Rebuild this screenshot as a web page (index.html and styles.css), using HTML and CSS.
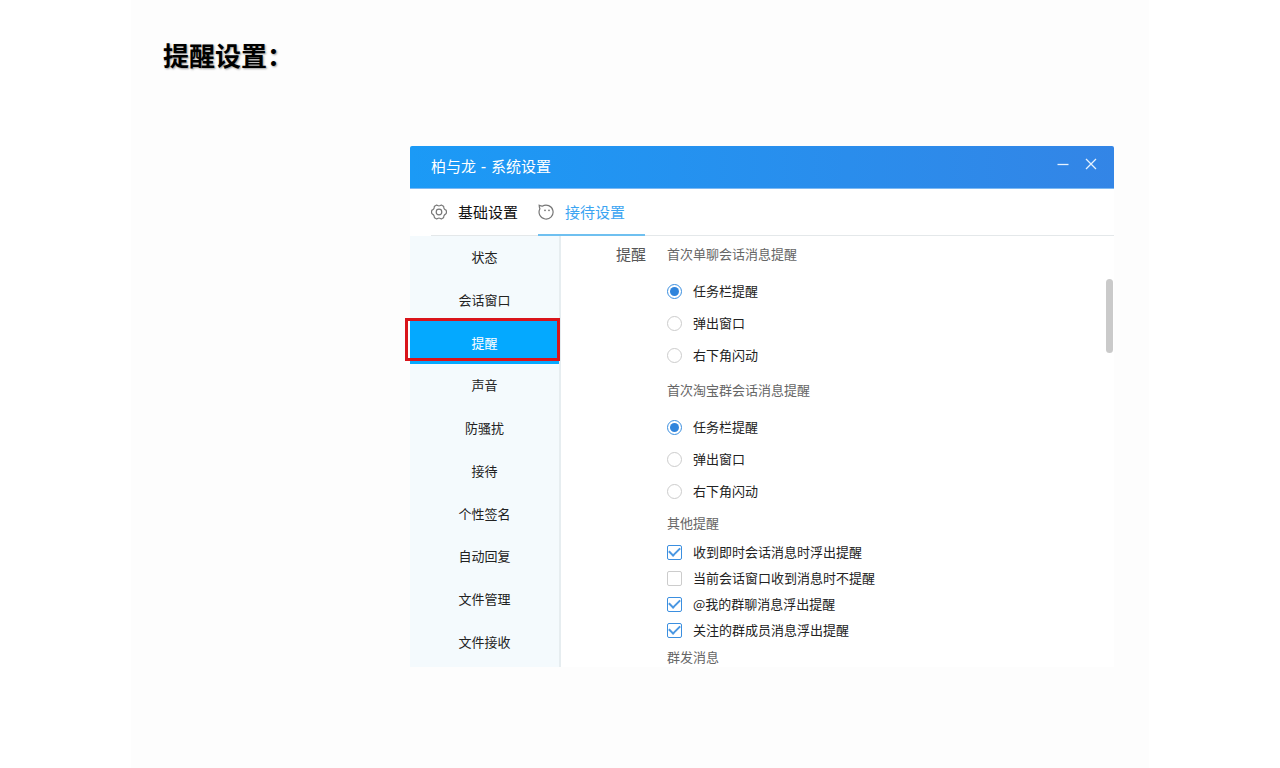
FILE: index.html
```html
<!DOCTYPE html>
<html lang="zh-CN">
<head>
<meta charset="utf-8">
<meta name="viewport" content="width=device-width, initial-scale=1">
<title>提醒设置</title>
<link rel="stylesheet" href="styles.css">
</head>
<body>
<main class="page">
  <h1 class="page-title">提醒设置：</h1>
  <section class="window" aria-label="系统设置">
    <header class="titlebar">
      <h2 class="titlebar-text">柏与龙 - 系统设置</h2>
      <button class="win-button" type="button" aria-label="最小化">
        <svg width="14" height="14" viewBox="0 0 14 14"><path d="M1.500 7.500h11"/></svg>
      </button>
      <button class="win-button" type="button" aria-label="关闭">
        <svg width="14" height="14" viewBox="0 0 14 14"><path d="M2 2l10 10M12 2L2 12"/></svg>
      </button>
    </header>
    <nav class="tabs">
      <button class="tab" type="button">
        <svg class="tab-icon" width="16" height="16" viewBox="0 0 16 16"><path d="M5.200 1.200Q6.200 1 6.700 1.600Q8 2.400 9.300 1.600Q9.800 1 10.800 1.200L12.400 2.200Q13 3 12.800 3.800Q13.200 5.300 14.500 5.900Q15.300 6.200 15.400 7V9Q15.300 9.800 14.500 10.100Q13.200 10.700 12.800 12.200Q13 13 12.400 13.800L10.800 14.800Q9.800 15 9.300 14.400Q8 13.600 6.700 14.400Q6.200 15 5.200 14.800L3.600 13.800Q3 13 3.200 12.200Q2.800 10.700 1.500 10.100Q.7 9.800.6 9V7Q.7 6.200 1.500 5.900Q2.800 5.300 3.200 3.800Q3 3 3.600 2.200Z"/><circle cx="8" cy="8" r="2.800"/></svg>
        <span>基础设置</span>
      </button>
      <button class="tab tab-active" type="button" aria-current="page">
        <svg class="tab-icon" width="16" height="16" viewBox="0 0 16 16"><path d="M1.200 1.200Q2.800 2 4.300 2.200A7 7 0 1 1 1.900 4.800Q1.100 3 1.200 1.200Z"/><circle class="eye" cx="7" cy="6.300" r=".9"/><circle class="eye" cx="11" cy="6.300" r=".9"/></svg>
        <span>接待设置</span>
      </button>
    </nav>
    <div class="body">
      <nav class="sidebar">
        <button class="side-item" type="button">状态</button>
        <button class="side-item" type="button">会话窗口</button>
        <button class="side-item side-item-active" type="button" aria-current="true">提醒</button>
        <button class="side-item" type="button">声音</button>
        <button class="side-item" type="button">防骚扰</button>
        <button class="side-item" type="button">接待</button>
        <button class="side-item" type="button">个性签名</button>
        <button class="side-item" type="button">自动回复</button>
        <button class="side-item" type="button">文件管理</button>
        <button class="side-item" type="button">文件接收</button>
      </nav>
      <form class="content">
        <h3 class="section-label">提醒</h3>
        <div class="groups">
          <h4 class="group-title">首次单聊会话消息提醒</h4>
          <div class="radios">
            <label class="option"><input class="radio" type="radio" name="single" checked>任务栏提醒</label>
            <label class="option"><input class="radio" type="radio" name="single">弹出窗口</label>
            <label class="option"><input class="radio" type="radio" name="single">右下角闪动</label>
          </div>
          <h4 class="group-title">首次淘宝群会话消息提醒</h4>
          <div class="radios">
            <label class="option"><input class="radio" type="radio" name="group" checked>任务栏提醒</label>
            <label class="option"><input class="radio" type="radio" name="group">弹出窗口</label>
            <label class="option"><input class="radio" type="radio" name="group">右下角闪动</label>
          </div>
          <h4 class="group-title group-title-close">其他提醒</h4>
          <div class="checks">
            <label class="option"><input class="check" type="checkbox" checked>收到即时会话消息时浮出提醒</label>
            <label class="option"><input class="check" type="checkbox">当前会话窗口收到消息时不提醒</label>
            <label class="option"><input class="check" type="checkbox" checked>@我的群聊消息浮出提醒</label>
            <label class="option"><input class="check" type="checkbox" checked>关注的群成员消息浮出提醒</label>
          </div>
          <h4 class="group-title group-title-close">群发消息</h4>
        </div>
        <div class="scroll-thumb"></div>
      </form>
    </div>
  </section>
</main>
</body>
</html>
```
FILE: styles.css
```css
* {
  box-sizing: border-box;
}

body {
  margin: 0;
  background: #fff;
  color: #222;
  font: 13px/20px "Noto Sans CJK SC", sans-serif;
}

h1, h2, h3, h4 {
  margin: 0;
  font-weight: 400;
}

button {
  padding: 0;
  border: 0;
  background: none;
  color: inherit;
  font: inherit;
}

.page {
  max-width: 1018px;
  min-height: 100vh;
  margin: 0 auto;
  padding: 35px 35px 100px 32px;
  background: #fdfdfd;
}

.page-title {
  margin-bottom: 71px;
  color: #000;
  font-size: 26px;
  font-weight: 700;
  line-height: 40px;
  text-shadow: 1px 1px 2px #999;
}

.window {
  margin-left: 247px;
  background: #fff;
}

.titlebar {
  display: flex;
  align-items: center;
  gap: 14px;
  height: 43px;
  padding: 0 16px 0 21px;
  border-bottom: 1px solid #7db9f3;
  border-radius: 2px 2px 0 0;
  background: linear-gradient(90deg, #1b9af6, #3385e6);
}

.titlebar-text {
  flex: 1;
  color: #fff;
  font: 15px/20px "DejaVu Sans", "Noto Sans CJK SC", sans-serif;
}

.win-button {
  display: flex;
  margin-bottom: 6px;
}

.win-button svg {
  fill: none;
  stroke: #e6f2ff;
  stroke-width: 1.3;
}

.tabs {
  display: flex;
  gap: 20px;
  height: 47px;
  margin-left: 21px;
  border-bottom: 1px solid #e4e8ea;
}

.tab {
  display: flex;
  align-items: center;
  gap: 11px;
  height: 47px;
  border-bottom: 2px solid transparent;
  color: #111;
  font-size: 15px;
}

.tab-active {
  padding-right: 20px;
  border-bottom: 2px solid #6fc0f0;
  color: #3ba4f2;
}

.tab-icon {
  fill: none;
  stroke: #777;
  stroke-width: 1.2;
}

.tab-icon .eye {
  fill: #777;
  stroke: none;
}

.body {
  display: flex;
}

.sidebar {
  display: grid;
  grid-auto-rows: 1fr;
  flex: 0 0 151px;
  padding-bottom: 4px;
  border-right: 2px solid #e6edf0;
  background: #f4fafd;
}

.side-item {
  position: relative;
}

.side-item-active {
  background: #04a9ff;
  color: #fff;
}

/* Red frame that marks the chosen entry */
.side-item-active::after {
  content: "";
  position: absolute;
  inset: -3px -1px 3px -5px;
  border: 3px solid #d9141a;
}

.content {
  display: flex;
  flex: 1;
  align-items: flex-start;
  height: 431px;
  padding: 8px 1px 0 55px;
  overflow: hidden;
}

.section-label {
  flex: 0 0 51px;
  color: #555;
  font-size: 15px;
}

.groups {
  flex: 1;
}

.group-title {
  color: #666;
  font-size: 13px;
}

.radios {
  display: grid;
  grid-auto-rows: 32px;
  padding: 11px 0 9px;
}

.radios:has(+ .group-title-close) {
  padding-bottom: 6px;
}

.checks {
  display: grid;
  grid-auto-rows: 26px;
  padding: 6px 0 4px;
}

.option {
  display: flex;
  align-items: center;
  gap: 11px;
}

.radio,
.check {
  display: grid;
  place-items: center;
  flex: none;
  appearance: none;
  width: 15px;
  height: 15px;
  margin: 0;
  border: 1px solid #ccc;
  background: #fff;
}

.radio {
  border-radius: 50%;
}

.check {
  border-radius: 2px;
}

.radio:checked,
.check:checked {
  border-color: #3b8fe0;
}

.radio:checked::after {
  content: "";
  width: 9px;
  height: 9px;
  border-radius: 50%;
  background: #2f84dc;
}

.check:checked::after {
  content: "";
  width: 9px;
  height: 5px;
  margin-bottom: 3px;
  border: solid #4a97e2;
  border-width: 0 0 2px 2px;
  transform: rotate(-45deg);
}

.scroll-thumb {
  width: 7px;
  height: 74px;
  margin-top: 35px;
  border-radius: 4px;
  background: #cacaca;
}
```
